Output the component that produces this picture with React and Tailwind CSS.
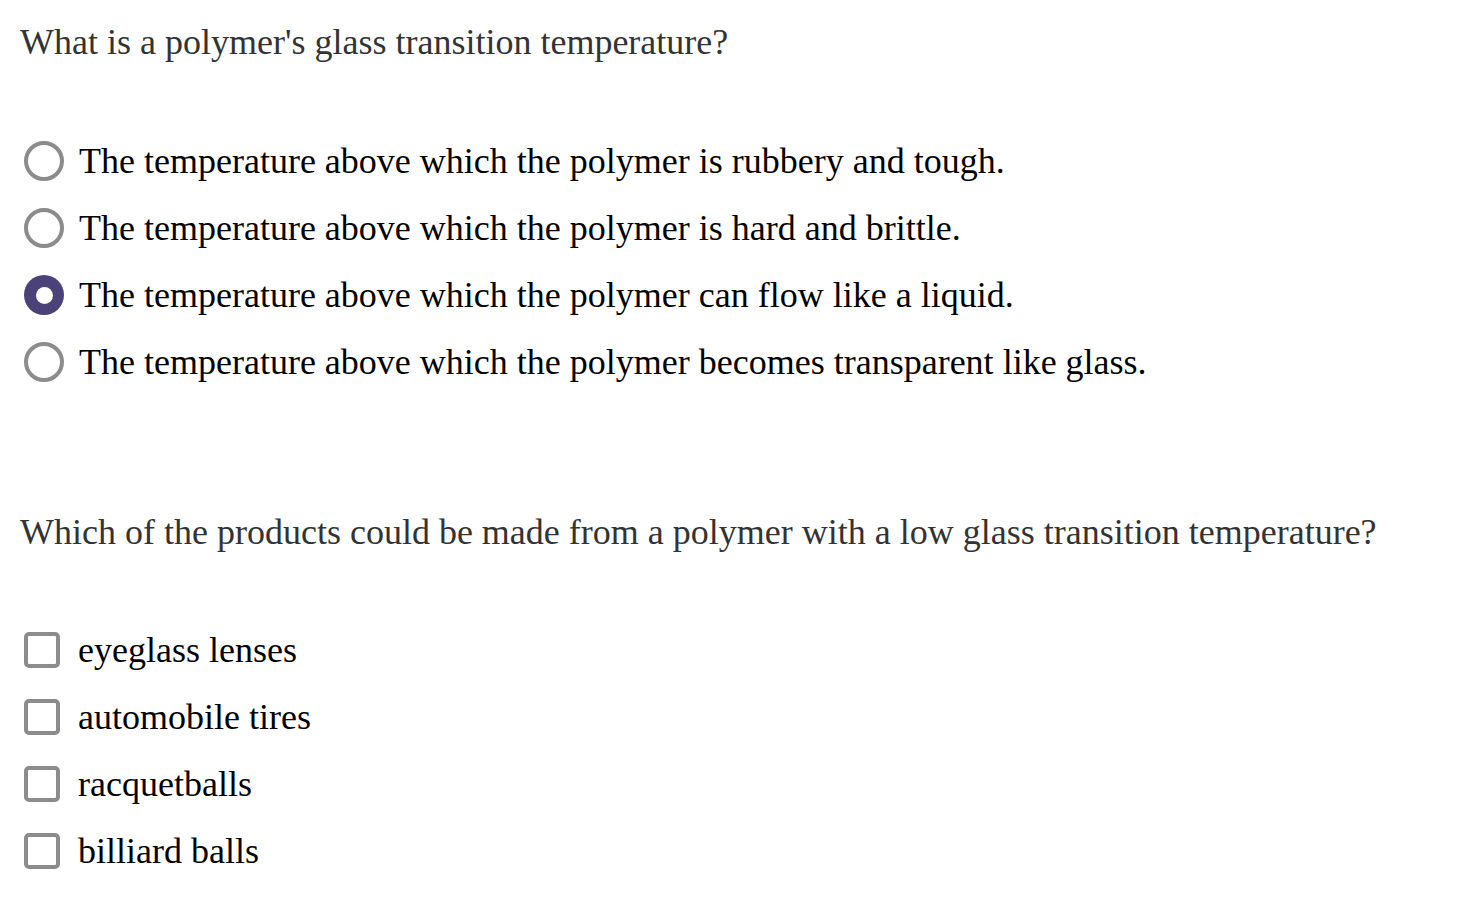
const radioOptions = [
  'The temperature above which the polymer is rubbery and tough.',
  'The temperature above which the polymer is hard and brittle.',
  'The temperature above which the polymer can flow like a liquid.',
  'The temperature above which the polymer becomes transparent like glass.',
];

const checkOptions = [
  'eyeglass lenses',
  'automobile tires',
  'racquetballs',
  'billiard balls',
];

const Radio = ({ checked }) =>
  checked ? (
    <span className="flex h-[40px] w-[40px] shrink-0 items-center justify-center rounded-full bg-[#4b4279]">
      <span className="h-[17px] w-[17px] rounded-full bg-white" />
    </span>
  ) : (
    <span className="h-[40px] w-[40px] shrink-0 rounded-full border-[4px] border-[#8c8c8c] bg-white" />
  );

const Checkbox = () => (
  <span className="h-[36px] w-[36px] shrink-0 rounded-[5px] border-[4px] border-[#8c8c8c] bg-white" />
);

export default function App() {
  return (
    <div className="min-h-screen bg-white pl-[20px] pt-[22px] font-['Liberation_Serif',serif]">
      <p className="text-[36px] leading-[40px] text-[#333333]">
        What is a polymer's glass transition temperature?
      </p>

      <div className="mt-[79px] flex flex-col gap-[27px] pl-[4px]">
        {radioOptions.map((text, i) => (
          <label key={text} className="flex items-center gap-[15px]">
            <Radio checked={i === 2} />
            <span className="text-[36px] leading-[40px] text-black">{text}</span>
          </label>
        ))}
      </div>

      <p className="mt-[130px] text-[36px] leading-[40px] text-[#333333]">
        Which of the products could be made from a polymer with a low glass transition temperature?
      </p>

      <div className="mt-[80px] flex flex-col gap-[31px] pl-[4px]">
        {checkOptions.map((text) => (
          <label key={text} className="flex items-center gap-[18px]">
            <Checkbox />
            <span className="text-[36px] leading-[36px] text-black">{text}</span>
          </label>
        ))}
      </div>
    </div>
  );
}
